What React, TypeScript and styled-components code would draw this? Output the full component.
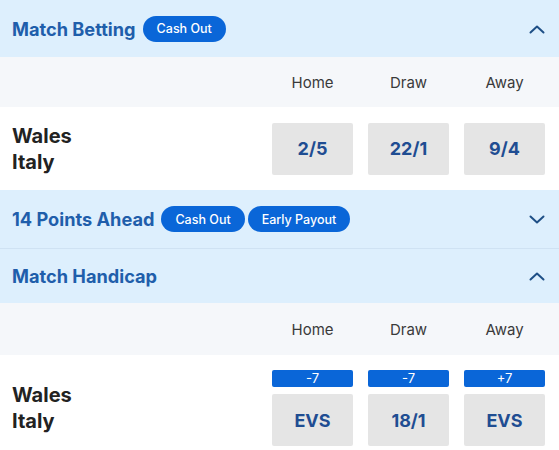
import React from "react";
import styled, { createGlobalStyle } from "styled-components";

const Global = createGlobalStyle`
  html, body { margin: 0; padding: 0; background: #ffffff; }
  body { font-family: Inter, "Noto Sans", "Liberation Sans", sans-serif; width: 559px; overflow: hidden; }
`;

const Page = styled.div`
  width: 559px;
  display: flex;
  flex-direction: column;
`;

const Header = styled.div<{ $h: number; $border?: boolean }>`
  height: ${(p) => p.$h}px;
  background: #ddeffd;
  display: flex;
  align-items: center;
  padding: 0 13px 0 12px;
  box-sizing: border-box;
  border-bottom: ${(p) => (p.$border ? "1px solid #cfe2f3" : "none")};
`;

const Title = styled.div`
  font-size: 18.2px;
  font-weight: 700;
  color: #1f5eab;
  margin-right: 7px;
`;

const Pills = styled.div`
  display: flex;
  gap: 3px;
  flex: 1;
`;

const Pill = styled.span`
  height: 26px;
  padding: 0 14px;
  border-radius: 13px;
  background: #0a66d8;
  color: #ffffff;
  font-size: 12.5px;
  font-weight: 500;
  display: inline-flex;
  align-items: center;
`;

const ColHead = styled.div<{ $h: number }>`
  height: ${(p) => p.$h}px;
  background: #f5f7fa;
  display: flex;
  justify-content: flex-end;
  align-items: center;
  padding-right: 14px;
  gap: 15px;
`;

const ColLabel = styled.div`
  width: 81px;
  text-align: center;
  font-size: 15px;
  color: #3a3a3a;
`;

const Row = styled.div<{ $h: number }>`
  min-height: ${(p) => p.$h}px;
  background: #ffffff;
  display: flex;
  align-items: center;
  padding: 0 14px 0 12px;
`;

const Teams = styled.div`
  flex: 1;
  font-size: 20px;
  font-weight: 700;
  line-height: 26px;
  color: #222222;
`;

const Cells = styled.div`
  display: flex;
  gap: 15px;
`;

const Cell = styled.div`
  width: 81px;
  display: flex;
  flex-direction: column;
  gap: 7px;
`;

const Handicap = styled.div`
  height: 17px;
  background: #0a66d8;
  border-radius: 2px;
  color: #ffffff;
  font-size: 13px;
  line-height: 17px;
  text-align: center;
`;

const Odds = styled.div`
  height: 52px;
  background: #e5e5e5;
  border-radius: 2px;
  display: flex;
  align-items: center;
  justify-content: center;
  font-size: 18px;
  font-weight: 700;
  color: #1f4d92;
`;

const Chevron = ({ up }: { up: boolean }) => (
  <svg width="18" height="10" viewBox="0 0 18 10" fill="none">
    <path
      d={up ? "M2.5 8.5 L9 2.5 L15.5 8.5" : "M2.5 2.5 L9 8.5 L15.5 2.5"}
      stroke="#1e4f86"
      strokeWidth="2"
      strokeLinecap="round"
      strokeLinejoin="round"
    />
  </svg>
);

const cols = ["Home", "Draw", "Away"];

export default function App() {
  return (
    <Page>
      <Global />
      <Header $h={57}>
        <Title>Match Betting</Title>
        <Pills>
          <Pill>Cash Out</Pill>
        </Pills>
        <Chevron up />
      </Header>
      <ColHead $h={50}>
        {cols.map((c) => (
          <ColLabel key={c}>{c}</ColLabel>
        ))}
      </ColHead>
      <Row $h={83}>
        <Teams>
          Wales
          <br />
          Italy
        </Teams>
        <Cells>
          {["2/5", "22/1", "9/4"].map((o) => (
            <Cell key={o}>
              <Odds>{o}</Odds>
            </Cell>
          ))}
        </Cells>
      </Row>
      <Header $h={59} $border>
        <Title>14 Points Ahead</Title>
        <Pills>
          <Pill>Cash Out</Pill>
          <Pill>Early Payout</Pill>
        </Pills>
        <Chevron up={false} />
      </Header>
      <Header $h={54}>
        <Title>Match Handicap</Title>
        <Pills />
        <Chevron up />
      </Header>
      <ColHead $h={52}>
        {cols.map((c) => (
          <ColLabel key={c}>{c}</ColLabel>
        ))}
      </ColHead>
      <Row $h={106}>
        <Teams>
          Wales
          <br />
          Italy
        </Teams>
        <Cells>
          {[
            ["-7", "EVS"],
            ["-7", "18/1"],
            ["+7", "EVS"],
          ].map(([h, o], i) => (
            <Cell key={i}>
              <Handicap>{h}</Handicap>
              <Odds>{o}</Odds>
            </Cell>
          ))}
        </Cells>
      </Row>
    </Page>
  );
}
